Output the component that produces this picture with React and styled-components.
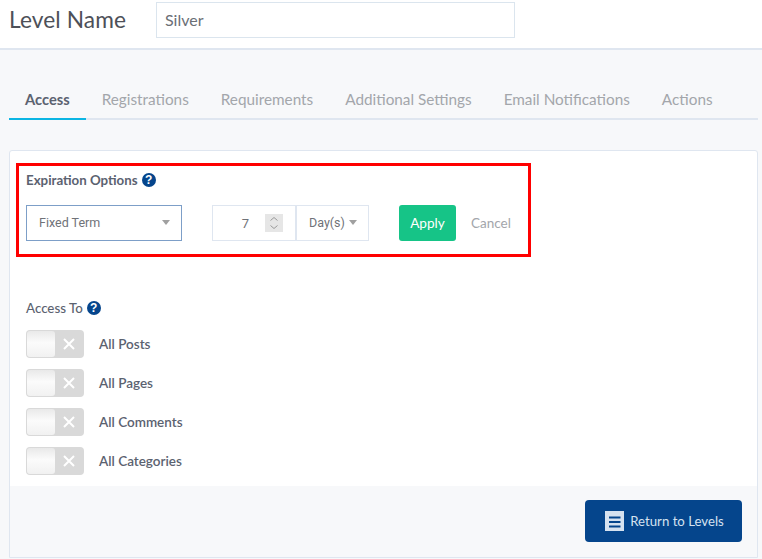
import React from "react";
import styled, { createGlobalStyle } from "styled-components";

const Global = createGlobalStyle`
  html, body { margin: 0; padding: 0; background: #f7f8fa; }
  body { font-family: "Lato", "Noto Sans", sans-serif; }
  * { box-sizing: border-box; }
`;

const Page = styled.div`
  width: 762px;
  height: 559px;
  overflow: hidden;
  display: flex;
  flex-direction: column;
`;

const Header = styled.header`
  height: 50px;
  flex: none;
  background: #fff;
  border-bottom: 2px solid #dfe6f0;
  display: flex;
  align-items: flex-start;
  padding: 2px 0 0 9px;
`;

const Title = styled.h1`
  margin: 0;
  width: 147px;
  height: 36px;
  line-height: 36px;
  font-size: 22.7px;
  font-weight: 400;
  color: #4d5058;
  letter-spacing: 0.1px;
`;

const NameInput = styled.div`
  width: 359px;
  height: 36px;
  border: 1px solid #dbe5ee;
  padding-left: 8px;
  line-height: 34px;
  font-size: 16px;
  color: #6b6f76;
`;

const Tabs = styled.nav`
  margin: 31px 4px 0 9px;
  height: 39px;
  flex: none;
  display: flex;
  border-bottom: 2px solid #dfe6f0;
`;

const Tab = styled.div`
  height: 39px;
  padding: 8px 16px 0;
  font-size: ${(p) => (p.$active ? "14.7px" : "15.3px")};
  line-height: 20px;
  font-weight: ${(p) => (p.$active ? 700 : 400)};
  color: ${(p) => (p.$active ? "#5b6270" : "#a3a6ab")};
  border-bottom: 2px solid ${(p) => (p.$active ? "#0cb5e3" : "transparent")};
  white-space: nowrap;
`;

const Card = styled.section`
  margin: 30px 4px 0 9px;
  height: 408px;
  flex: none;
  background: #fff;
  border: 1px solid #dfe6f0;
  border-radius: 3px 3px 0 0;
  display: flex;
  flex-direction: column;
`;

const Expiration = styled.div`
  margin: 12px 0 0 6px;
  width: 515px;
  height: 94px;
  flex: none;
  border: 3px solid #f00;
  padding: 4px 0 0 7px;
`;

const SectionLabel = styled.div`
  display: flex;
  align-items: center;
  gap: 4px;
  height: 20px;
  font-size: 13.3px;
  line-height: 20px;
  font-weight: ${(p) => (p.$bold ? 700 : 500)};
  color: #5b6270;
`;

const Help = styled.span`
  width: 14px;
  height: 14px;
  border-radius: 50%;
  background: #05458c;
  color: #fff;
  font-size: 12px;
  line-height: 14px;
  font-weight: 700;
  text-align: center;
  font-family: "Liberation Sans", sans-serif;
`;

const Controls = styled.div`
  display: flex;
  align-items: stretch;
  height: 36px;
  margin-top: 15px;
`;

const Caret = styled.span`
  width: 0;
  height: 0;
  border-left: 4.5px solid transparent;
  border-right: 4.5px solid transparent;
  border-top: 5px solid #a0a0a0;
`;

const Select = styled.div`
  width: 156px;
  border: 1px solid #7d9fc8;
  display: flex;
  align-items: center;
  justify-content: space-between;
  padding: 0 11px 2px 12px;
  font-family: "Roboto", sans-serif;
  font-size: 12.5px;
  color: #6f7278;
`;

const NumberBox = styled.div`
  margin-left: 30px;
  width: 85px;
  border: 1px solid #dfe6f0;
  border-right-width: 2px;
  display: flex;
  align-items: center;
  justify-content: flex-end;
  padding-right: 12px;
  gap: 16px;
  font-family: "Roboto", sans-serif;
  font-size: 13px;
  color: #6f7278;
`;

const Spinner = styled.svg`
  width: 18px;
  height: 18px;
  display: block;
`;

const Unit = styled.div`
  width: 72px;
  border: 1px solid #dfe6f0;
  border-left: none;
  display: flex;
  align-items: center;
  gap: 4px;
  padding: 0 0 2px 12px;
  font-family: "Roboto", sans-serif;
  font-size: 12.5px;
  color: #6f7278;
`;

const Apply = styled.div`
  margin-left: 30px;
  width: 57px;
  background: #16c487;
  border-radius: 3px;
  color: #fff;
  font-size: 13.6px;
  line-height: 37px;
  text-align: center;
`;

const Cancel = styled.div`
  margin-left: 15px;
  font-size: 13.5px;
  line-height: 37px;
  color: #a3a6ab;
`;

const Access = styled.div`
  flex: 1;
  padding: 41px 0 0 16px;
`;

const ToggleRows = styled.div`
  margin-top: 12px;
  display: flex;
  flex-direction: column;
  gap: 11px;
`;

const ToggleRow = styled.div`
  display: flex;
  align-items: center;
  gap: 15px;
  height: 28px;
  font-size: 13.5px;
  font-weight: 600;
  color: #5b6270;
`;

const Toggle = styled.div`
  width: 58px;
  height: 28px;
  background: #d9d9d9;
  border-radius: 4px;
  display: flex;
  align-items: center;
  padding: 1px;
`;

const Knob = styled.div`
  width: 28px;
  height: 26px;
  border-radius: 3px;
  background: linear-gradient(#e9e9e9, #fbfbfb 45%, #f1f1f1);
`;

const Cross = styled.svg`
  width: 12px;
  height: 12px;
  margin-left: 8px;
  stroke: #fff;
  stroke-width: 2;
`;

const Footer = styled.footer`
  height: 71px;
  flex: none;
  background: #f7f8fa;
  display: flex;
  justify-content: flex-end;
  align-items: flex-start;
  padding: 14px 15px 0 0;
`;

const Return = styled.div`
  width: 157px;
  height: 42px;
  background: #05458c;
  border-radius: 4px;
  display: flex;
  align-items: center;
  justify-content: center;
  gap: 6px;
  color: #d6e2f0;
  font-size: 13.2px;
  padding: 0 0 1px 2px;
`;

const ListIcon = styled.svg`
  width: 19px;
  height: 20px;
  display: block;
`;

const tabs = ["Registrations", "Requirements", "Additional Settings", "Email Notifications", "Actions"];
const access = ["All Posts", "All Pages", "All Comments", "All Categories"];

export default function App() {
  return (
    <Page>
      <Global />
      <Header>
        <Title>Level Name</Title>
        <NameInput>Silver</NameInput>
      </Header>
      <Tabs>
        <Tab $active>Access</Tab>
        {tabs.map((t) => (
          <Tab key={t}>{t}</Tab>
        ))}
      </Tabs>
      <Card>
        <Expiration>
          <SectionLabel $bold>
            Expiration Options <Help>?</Help>
          </SectionLabel>
          <Controls>
            <Select>
              Fixed Term
              <Caret />
            </Select>
            <NumberBox>
              7
              <Spinner viewBox="0 0 18 18">
                <rect width="18" height="18" fill="#e6e6e6" />
                <path d="M5.5 6.5 9 3.5l3.5 3M5.5 11.5 9 14.5l3.5-3" fill="none" stroke="#9a9a9a" strokeWidth="1" />
              </Spinner>
            </NumberBox>
            <Unit>
              Day(s)
              <Caret />
            </Unit>
            <Apply>Apply</Apply>
            <Cancel>Cancel</Cancel>
          </Controls>
        </Expiration>
        <Access>
          <SectionLabel>
            Access To <Help>?</Help>
          </SectionLabel>
          <ToggleRows>
            {access.map((a) => (
              <ToggleRow key={a}>
                <Toggle>
                  <Knob />
                  <Cross viewBox="0 0 12 12">
                    <path d="M1 1l10 10M11 1 1 11" />
                  </Cross>
                </Toggle>
                {a}
              </ToggleRow>
            ))}
          </ToggleRows>
        </Access>
        <Footer>
          <Return>
            <ListIcon viewBox="0 0 19 20">
              <rect width="19" height="20" fill="#d6e2f0" />
              <path d="M4 6.5h11.5M4 11h11.5M4 15.5h11.5" stroke="#05458c" strokeWidth="2" />
            </ListIcon>
            Return to Levels
          </Return>
        </Footer>
      </Card>
    </Page>
  );
}
